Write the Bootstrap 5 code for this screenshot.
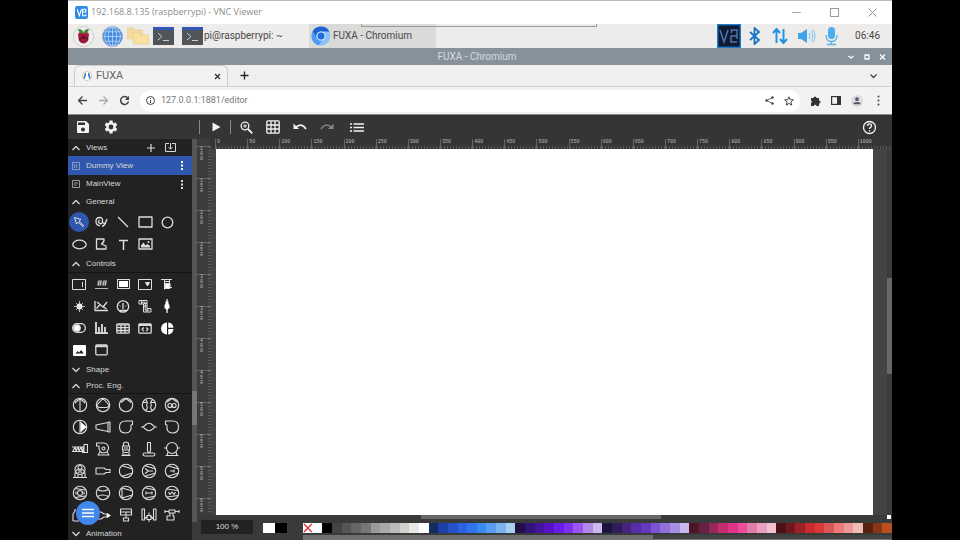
<!DOCTYPE html>
<html lang="en">
<head>
<meta charset="utf-8">
<meta name="viewport" content="width=device-width, initial-scale=1">
<title>FUXA - Chromium</title>
<link href="https://cdn.jsdelivr.net/npm/bootstrap@5.3.0/dist/css/bootstrap.min.css" rel="stylesheet">
<style>
body{background:#000;font-family:Roboto,"Liberation Sans",sans-serif;font-size:10px;line-height:1.2;color:#444}
.screen{margin:0 68px;background:#fff}
button{background:none;border:0;padding:0;color:inherit;font:inherit;display:flex;align-items:center;justify-content:center;flex:none}
svg{display:block;flex:none}
.ln{fill:none;stroke:currentColor;stroke-width:1.3;stroke-linejoin:round}
.thin{stroke-width:1}
.vnc-bar{height:24px;color:#8c8c8c;border-top:1px solid #bbb;background:#fff;font-family:"Open Sans","Noto Sans",sans-serif;font-size:9px;padding:0 15px 0 7px;gap:3px}
.vnc-buttons{gap:29px}
.task-bar{height:24px;background:#eeebeb;color:#484848;position:relative;padding-left:5px}
.vnc-tab{position:absolute;left:35.6%;top:0;height:3px;border:1px solid #999;border-top:0;width:236px}
.task-item{width:127px;height:100%;gap:1px}
.task-item.active{background:#dadad8;padding-left:2px;gap:2px}
.tray{gap:6px;padding-right:4px}
.window-bar{height:17px;background:#87919a;color:#d4dae0}
.window-buttons{gap:8px;color:#fff;padding-right:6px}
.tab-strip{height:22px;background:#efefef;border-bottom:1px solid #d2d2d2;padding-right:15px}
.page-tab{width:154px;margin-left:6px;background:#f2f2f2;border:1px solid #ccc;border-bottom:0;border-radius:6px 6px 0 0;color:#666;font-size:11px;padding:0 6px 0 7px;gap:4px}
.address-bar{height:28px;background:#f2f2f2;color:#444;border-bottom:1px solid #888;padding:0 8px 0 9px;gap:10px}
.url-box{background:#fff;border-radius:12px;height:22px;padding:0 6px;gap:6px}
.url-box input{border:0;background:none;outline:0;padding:0;font-size:9px;color:#777;min-width:0}
.tool-bar{height:24px;background:#353535;color:#f2f2f2;padding:0 15px 0 8px}
.tool-bar .rule{width:1px;height:14px;background:#888}
.side{width:124px;background:#222;color:#d8d8d8;font:8px/10px "Liberation Sans",Arial,sans-serif;overflow:hidden}
.side-head{display:flex;align-items:center;height:18px;padding:0 12px 0 4px;gap:6px;flex:none}
.side-head.lined{border-bottom:1px solid #141414}
.side-head.first{height:17px}
.side-head.slim{height:15px}
.view-row{display:flex;align-items:center;height:18px;padding:0 5px 0 4px;gap:6px;flex:none}
.view-row.current{background:#2f57ad;height:19px}
.pal{display:grid;grid-template-columns:repeat(5,22px);grid-auto-rows:22px;color:#ddd;flex:none}
.pal.wide{grid-template-columns:repeat(5,23px)}
.pal.wide .ln{stroke-width:1.1}
.pal .picked{background:#2f57ad;border-radius:50%;width:20px;height:20px;margin:1px}
.side-scroll{width:5px;background:#565656;padding-top:252px;border-bottom:18px solid #3a3a3a}
.side-scroll i{display:block;height:34px;background:#777}
.fab{position:absolute;left:8px;bottom:15px;width:24px;height:24px;border-radius:50%;background:#3f87ea;color:#fff}
.ruler-y{width:14px;background:#3c3c3c;padding-top:7px;overflow:hidden;font:5px/5px "Liberation Mono",monospace;color:#bbb}
.ruler-y span{display:block;height:32px;width:14px;padding:0 8px 0 3px;word-break:break-all;border-top:1px solid #666;
 background:repeating-linear-gradient(#5a5a5a 0 1px,transparent 1px 3px) right/3px 100% no-repeat;flex:none}
.ruler-y span:last-child{height:16px}
.ruler-x{height:10px;background:#353535;font:5px/6px "Liberation Mono",monospace;color:#bbb;padding:0 2px 0 4px}
.ruler-x span{flex:1 1 0;min-width:0;border-left:1px solid #666;padding-left:1px;background:repeating-linear-gradient(90deg,#5a5a5a 0 1px,transparent 1px 3px) bottom/100% 3px no-repeat}
.stage{background:#444}
.sheet{background:#fff;margin-left:5px}
.scroll-y{width:5px;background:#3c3c3c;padding-top:129px;margin-left:14px}
.scroll-y i{display:block;height:96px;background:#686868}
.scroll-x{height:5px;background:#3a3a3a;padding:0 1px 0 224px}
.scroll-x i{display:block;height:4px;width:240px;background:#686868}
.scroll-x b{width:4px;height:4px;background:#fff}
.foot{height:20px;background:#3a3a3a;color:#ddd}
.zoom-box{width:52px;height:14px;background:#222;font:8px/14px "Liberation Sans",Arial,sans-serif;text-align:center;margin-left:4px}
.sw{flex:1 1 0;height:10px}
.pair{margin:3px 16px 0 10px}
.pair i{width:12px;height:10px}
.pal-scroll{height:5px;background:#444;border-bottom:1px solid #777}
.pal-scroll i{display:block;width:59.4%;height:100%;background:#707070}
</style>
</head>
<body>
<div class="screen d-flex flex-column vh-100 overflow-hidden">
<header class="vnc-bar d-flex align-items-center flex-shrink-0">
 <svg width="13" height="13" viewBox="0 0 12 12"><rect width="12" height="12" rx="2" fill="#2e8ae6"/><path d="M2 3l2 6 2-6M7 5.500V3h3v2.500H7V9h3V7.500" fill="none" stroke="#fff"/></svg>
 <span class="flex-grow-1">192.168.8.135 (raspberrypi) - VNC Viewer</span>
 <div class="vnc-buttons d-flex">
 <button type="button" aria-label="Minimise"><svg width="9" height="9" viewBox="0 0 9 9" stroke="#aaa"><path d="M0 4.500h9"/></svg></button>
 <button type="button" aria-label="Maximise"><svg width="9" height="9" viewBox="0 0 9 9" stroke="#999" fill="none"><rect x=".5" y=".5" width="8" height="8"/></svg></button>
 <button type="button" aria-label="Close"><svg width="9" height="9" viewBox="0 0 9 9" stroke="#999"><path d="M.5.500l8 8m0-8l-8 8"/></svg></button>
 </div>
</header>
<div class="task-bar d-flex align-items-center pe-2 flex-shrink-0">
 <div class="vnc-tab"></div>
 <button type="button" aria-label="Raspberry menu" class="me-2"><svg width="21" height="21" viewBox="0 0 21 21"><circle cx="10.500" cy="10.500" r="10" fill="#eee" stroke="#ccc"/><circle cx="8" cy="9" r="3" fill="#b3203f"/><circle cx="13" cy="9" r="3" fill="#b3203f"/><circle cx="10.500" cy="12.500" r="5" fill="#9d1838"/><circle cx="10.500" cy="11.500" r="1.500" fill="#4c1020"/><circle cx="7" cy="12.500" r="1" fill="#4c1020"/><circle cx="14" cy="12.500" r="1" fill="#4c1020"/><path d="M5 3q5 0 5.500 4Q6 8 5 3zM16 3q-5 0-5.500 4Q15 8 16 3z" fill="#3f8a35"/></svg></button>
 <button type="button" aria-label="Browser" class="me-1"><svg width="21" height="21" viewBox="0 0 20 20" fill="none" stroke="#b4d6f8" stroke-width=".8"><circle cx="10" cy="10" r="9.500" fill="#4688dc" stroke="#8aa0b8"/><ellipse cx="10" cy="10" rx="4" ry="9"/><ellipse cx="10" cy="10" rx="7.500" ry="9"/><path d="M10 1v18M1 10h18M2.500 5.500h15M2.500 14.500h15"/></svg></button>
 <button type="button" aria-label="Files" class="me-1"><svg width="22" height="18" viewBox="0 0 22 18" stroke="#e3cc8c" stroke-width=".6"><path d="M.5 1h6l1 2h8v9H.5z" fill="#f4dca0"/><path d="M6.500 6h6l1 2h8v9h-15z" fill="#fbe0a0"/></svg></button>
 <button type="button" aria-label="Terminal" class="me-2"><svg width="21" height="18" viewBox="0 0 21 18"><rect width="21" height="18" fill="#50555a"/><rect width="21" height="3" fill="#3157b8"/><path d="M5 6l4 3.500L5 13M10 13.500h6" fill="none" stroke="#ccc"/></svg></button>
 <div class="task-item d-flex align-items-center"><svg width="21" height="18" viewBox="0 0 21 18"><rect width="21" height="18" fill="#50555a"/><rect width="21" height="3" fill="#3157b8"/><path d="M5 6l4 3.500L5 13M10 13.500h6" fill="none" stroke="#ccc"/></svg><span>pi@raspberrypi: ~</span></div>
 <div class="task-item active d-flex align-items-center"><svg width="20" height="20" viewBox="0 0 20 20"><circle cx="10" cy="10" r="9.500" fill="#8ec3fa"/><path d="M10 .5a9.500 9.500 0 0 1 8.500 5H10a4.500 4.500 0 0 0-4 7L1.600 5.500A9.500 9.500 0 0 1 10 .5z" fill="#1c62d0"/><path d="M1.600 5.500L6 12.500a4.500 4.500 0 0 0 5 2l-3 4.800A9.500 9.500 0 0 1 1.600 5.500z" fill="#4c9af5"/><circle cx="10" cy="10" r="4.500" fill="#cfe5fd"/><circle cx="10" cy="10" r="3.500" fill="#1d6fe0"/></svg><span>FUXA - Chromium</span></div>
 <div class="tray ms-auto d-flex align-items-center">
 <svg width="24" height="24" viewBox="0 0 24 24"><rect x=".7" y=".7" width="22.600" height="22.600" fill="#101a30" stroke="#1c7ad0" stroke-width="1.400"/><path d="M3 6l4 12 4-12M20 18h-6v-6h6V6h-5.500v3M20 12v3" fill="none" stroke="#4a78b0" stroke-width="1.500"/></svg>
 <svg width="15" height="18" viewBox="0 0 15 18" fill="none" stroke="#1675c8" stroke-width="1.800"><path d="M3 5l9 8-4.500 4V1L12 5l-9 8"/></svg>
 <svg width="23" height="18" viewBox="0 0 23 18" fill="none" stroke="#2394e4" stroke-width="2"><path d="M8.500 16V2M5 6l3.500-4L12 6M15.500 2v14M12 12l3.500 4 3.500-4"/></svg>
 <svg width="19" height="16" viewBox="0 0 19 16"><path d="M1 5h3l6-4v14l-6-4H1z" fill="#3da5ea"/><path d="M12 5q2 3 0 6M14 3q3.500 5 0 10M16 1.500q4 6.500 0 13" fill="none" stroke="#7bc4f3"/></svg>
 <svg width="19" height="20" viewBox="0 0 19 20"><rect x="6" y="1" width="7" height="12" rx="3.500" fill="#4dadee"/><path d="M4 9q0 6.500 5.500 6.500T15 9M9.500 15v3.500M5 18.500h9" fill="none" stroke="#58b2ee" stroke-width="1.300"/></svg>
 <span class="ps-2">06:46</span>
 </div>
</div>
<div class="window-bar row g-0 align-items-center flex-shrink-0 flex-nowrap">
 <div class="col"></div><div class="col text-center">FUXA - Chromium</div>
 <div class="window-buttons col d-flex justify-content-end">
 <button type="button" aria-label="Minimise window"><svg class="ln" width="8" height="8" viewBox="0 0 8 8"><path d="M1.500 3L4 5l2.500-2"/></svg></button>
 <button type="button" aria-label="Maximise window"><svg class="ln" width="8" height="8" viewBox="0 0 8 8"><rect x="2" y="2" width="4" height="4"/></svg></button>
 <button type="button" aria-label="Close window"><svg class="ln" width="7" height="8" viewBox="0 0 7 8"><path d="M1 1.500l5 5m0-5l-5 5"/></svg></button>
 </div>
</div>
<div class="tab-strip d-flex align-items-stretch flex-shrink-0">
 <div class="page-tab d-flex align-items-center">
 <svg width="10" height="10" viewBox="0 0 10 10"><circle cx="5" cy="5" r="4.500" fill="#fff" stroke="#d8c9a0"/><path d="M1.500 7.500Q2 2 4 1.500L4 4.500 2.500 8zM8.500 7.500Q8 2 6 1.500L6 4.500 7.500 8z" fill="#3c80c8"/></svg>
 <span class="flex-grow-1">FUXA</span>
 <button type="button" aria-label="Close tab"><svg class="ln" style="color:#333" width="7" height="7" viewBox="0 0 7 7"><path d="M1 1l5 5m0-5L1 6"/></svg></button></div>
 <button type="button" aria-label="New tab" class="ms-2 ps-1 text-dark"><svg class="ln" width="9" height="9" viewBox="0 0 9 9"><path d="M4.500.5v8M.5 4.500h8"/></svg></button>
 <button type="button" aria-label="Search tabs" class="ms-auto"><svg class="ln" width="7" height="6" viewBox="0 0 7 6"><path d="M.5 1.500l3 3 3-3"/></svg></button>
</div>
<div class="address-bar d-flex align-items-center flex-shrink-0">
 <button type="button" aria-label="Back"><svg class="ln" width="11" height="11" viewBox="0 0 11 11"><path d="M10 5.500H1.500M5.500 1.500l-4 4 4 4"/></svg></button>
 <button type="button" aria-label="Forward" style="color:#aaa"><svg class="ln" width="11" height="11" viewBox="0 0 11 11"><path d="M1 5.500h8.500M5.500 1.500l4 4-4 4"/></svg></button>
 <button type="button" aria-label="Reload"><svg width="11" height="11" viewBox="0 0 11 11"><path d="M8.800 3A4 4 0 1 0 9.500 6.500" fill="none" stroke="#444" stroke-width="1.500"/><path d="M10 .8V5H5.800z" fill="#444"/></svg></button>
 <div class="url-box d-flex align-items-center flex-grow-1">
 <svg class="ln thin" width="9" height="9" viewBox="0 0 9 9"><circle cx="4.500" cy="4.500" r="4"/><path d="M4.500 4v3M4.500 2v1"/></svg>
 <input class="flex-grow-1" type="text" aria-label="Address" value="127.0.0.1:1881/editor">
 <button type="button" aria-label="Share" class="me-1"><svg width="9" height="9" viewBox="0 0 9 9" fill="#444"><path d="M7.500 1.500l-6 3 6 3" fill="none" stroke="#444" stroke-width=".8"/><circle cx="7.500" cy="1.500" r="1.200"/><circle cx="1.500" cy="4.500" r="1.200"/><circle cx="7.500" cy="7.500" r="1.200"/></svg></button>
 <button type="button" aria-label="Bookmark"><svg class="ln thin" width="10" height="10" viewBox="0 0 10 10"><path d="M5 .8l1.200 2.900 3.200.2-2.500 2 .8 3.200L5 7.400 2.300 9.100l.8-3.200-2.500-2 3.200-.2z"/></svg></button>
 </div>
 <button type="button" aria-label="Extensions"><svg width="11" height="11" viewBox="0 0 11 11" fill="#333"><path d="M1 3h2.500a1.500 1.500 0 1 1 3 0H9v2.500a1.500 1.500 0 0 1 0 3V11H6.500a1.300 1.300 0 0 0-2.600 0H1V8a1.400 1.400 0 0 0 0-2.600z"/></svg></button>
 <button type="button" aria-label="Side panel"><svg width="10" height="9" viewBox="0 0 10 9"><rect x=".6" y=".6" width="8.800" height="7.800" fill="none" stroke="#333" stroke-width="1.200"/><path d="M6 0h4v9H6z" fill="#333"/></svg></button>
 <button type="button" aria-label="Profile"><svg width="12" height="12" viewBox="0 0 13 13" fill="#555a68"><circle cx="6.500" cy="6.500" r="6.500" fill="#dcdce0"/><circle cx="6.500" cy="4.500" r="2"/><path d="M2.500 10q0-2.500 4-2.500t4 2.500z"/></svg></button>
 <button type="button" aria-label="Browser menu"><svg width="11" height="11" viewBox="0 0 11 11" fill="#444"><circle cx="5.500" cy="1.500" r="1"/><circle cx="5.500" cy="5.500" r="1"/><circle cx="5.500" cy="9.500" r="1"/></svg></button>
</div>
<nav class="tool-bar d-flex align-items-center flex-shrink-0" aria-label="Editor">
 <button type="button" aria-label="Save"><svg width="14" height="14" viewBox="0 0 14 14"><path fill="currentColor" fill-rule="evenodd" d="M2 1h8l3 3v8a1 1 0 0 1-1 1H2a1 1 0 0 1-1-1V2a1 1 0 0 1 1-1zm0 1.500V5h7V2.500zM7 7.500a2 2 0 1 0 .01 0z"/></svg></button>
 <button type="button" aria-label="Settings" style="margin-left:13px"><svg width="16" height="16" viewBox="0 0 24 24" fill="currentColor"><path d="M19.140 12.940c.04-.3.060-.61.060-.94s-.02-.64-.07-.94l2.030-1.580a.49.490 0 0 0 .12-.61l-1.920-3.320a.49.490 0 0 0-.59-.22l-2.390.96a7 7 0 0 0-1.620-.94l-.36-2.540A.48.480 0 0 0 13.920 2.400h-3.840a.48.480 0 0 0-.47.410l-.36 2.540a7.200 7.200 0 0 0-1.620.94l-2.390-.96a.48.480 0 0 0-.59.220L2.740 8.870a.47.470 0 0 0 .12.610l2.030 1.580a7 7 0 0 0 0 1.880l-2.030 1.580a.49.490 0 0 0-.12.610l1.920 3.320c.12.220.37.290.59.220l2.390-.96c.5.380 1.030.7 1.620.94l.36 2.540c.05.240.24.410.48.410h3.840c.24 0 .44-.17.470-.41l.36-2.540a7.200 7.200 0 0 0 1.620-.94l2.390.96c.22.080.47 0 .59-.22l1.920-3.320a.47.470 0 0 0-.12-.61zM12 15.600a3.600 3.600 0 1 1 0-7.200 3.600 3.600 0 0 1 0 7.200z"/></svg></button>
 <span class="rule" style="margin-left:80px"></span>
 <button type="button" aria-label="Run" style="margin-left:11px"><svg width="10" height="10" viewBox="0 0 10 10" fill="currentColor"><path d="M1.500.5v9l8-4.500z"/></svg></button>
 <span class="rule" style="margin-left:9px"></span>
 <div class="d-flex align-items-center" style="gap:13px;margin-left:9px">
 <button type="button" aria-label="Zoom"><svg class="ln" width="13" height="13" viewBox="0 0 13 13"><circle cx="5" cy="5" r="3.800"/><path d="M8 8l4.300 4.300" stroke-width="1.800"/><path d="M3.200 5h3.600M5 3.200v3.600" stroke-width="1"/></svg></button>
 <button type="button" aria-label="Grid"><svg class="ln" width="14" height="14" viewBox="0 0 14 14"><rect x=".8" y=".8" width="12.400" height="12.400" rx="1"/><path d="M5 1v12M9 1v12M1 5h12M1 9h12"/></svg></button>
 <button type="button" aria-label="Undo"><svg width="14" height="10" viewBox="0 0 14 10"><path d="M2.500 5.500Q8.500 0 13 7" fill="none" stroke="currentColor" stroke-width="1.800"/><path d="M.5 1.500V7H6z" fill="currentColor"/></svg></button>
 <button type="button" aria-label="Redo" style="color:#888"><svg width="14" height="10" viewBox="0 0 14 10"><path d="M11.500 5.500Q5.500 0 1 7" fill="none" stroke="currentColor" stroke-width="1.500"/><path d="M13.500 1.500V7H8z" fill="currentColor"/></svg></button>
 <button type="button" aria-label="List" style="margin-left:3px"><svg width="14" height="9" viewBox="0 0 14 9" fill="none" stroke="currentColor" stroke-width="1.500"><path d="M0 1h2M3.500 1H14M0 4.500h2M3.500 4.500H14M0 8h2M3.500 8H14"/></svg></button>
 </div>
 <button type="button" aria-label="Help" class="ms-auto"><svg class="ln" width="15" height="15" viewBox="0 0 15 15"><circle cx="7.500" cy="7.500" r="6"/><path d="M5.500 6q0-2.200 2-2.200t2 1.900q0 1-1 1.700t-1 1.600M7.500 10.200v1.300"/></svg></button>
</nav>
<main class="d-flex flex-grow-1 position-relative" style="min-height:0">
<aside class="side d-flex flex-column flex-shrink-0">
 <div class="side-head first"><svg class="ln" width="8" height="6" viewBox="0 0 8 6"><path d="M.5 5L4 1.500 7.500 5"/></svg><span class="flex-grow-1">Views</span>
 <button type="button" aria-label="Add view" class="me-1"><svg class="ln" width="8" height="8" viewBox="0 0 8 8"><path d="M4 0v8M0 4h8" stroke-width="1.200"/></svg></button>
 <button type="button" aria-label="Import view" class="me-1"><svg class="ln thin" width="11" height="9" viewBox="0 0 11 9"><path d="M4 .5H.5v8h10v-8H7M5.500 0v6M3.500 4.200l2 2 2-2"/></svg></button></div>
 <div class="view-row current"><svg class="ln thin" stroke-dasharray="1 1" width="8" height="8" viewBox="0 0 8 8"><rect x=".5" y=".5" width="7" height="7"/><path d="M2 3h4M2 5h4"/></svg><span class="flex-grow-1">Dummy View</span><button type="button" aria-label="Dummy View menu"><svg width="10" height="9" viewBox="0 0 10 9" fill="#fff"><path d="M4 0h2v2H4zM4 3.500h2v2H4zM4 7h2v2H4z"/></svg></button></div>
 <div class="view-row"><svg class="ln thin" style="color:#999" width="8" height="8" viewBox="0 0 8 8"><rect x=".5" y=".5" width="7" height="7"/><path d="M2 3h4M2 5h2.500"/></svg><span class="flex-grow-1">MainView</span><button type="button" aria-label="MainView menu"><svg width="10" height="9" viewBox="0 0 10 9" fill="#ddd"><path d="M4 0h2v2H4zM4 3.500h2v2H4zM4 7h2v2H4z"/></svg></button></div>
 <div class="side-head"><svg class="ln" width="8" height="6" viewBox="0 0 8 6"><path d="M.5 5L4 1.500 7.500 5"/></svg><span>General</span></div>
 <div class="pal">
 <button type="button" aria-label="Select" class="picked"><svg class="ln thin" width="12" height="12" viewBox="0 0 12 12"><path d="M1.500 1.500L3.500 8l1.700-1.800L10.500 11M1.500 1.500L8 3.500 6 5.200 11 10"/></svg></button>
 <button type="button" aria-label="Pencil"><svg class="ln" width="13" height="12" viewBox="0 0 13 12"><path d="M5 9.500Q1 9.500 1 5.500T4.500 1.500 7.500 5 5 7.500 3.500 5.500 5 4M7 5q1.500 3 2.500 2.500T12 3M11 5.500q-1 4-4 5"/></svg></button>
 <button type="button" aria-label="Line"><svg class="ln" width="12" height="12" viewBox="0 0 12 12"><path d="M1 1l10 10"/></svg></button>
 <button type="button" aria-label="Rectangle"><svg class="ln" width="15" height="12" viewBox="0 0 15 12"><rect x="1" y="1" width="13" height="10"/></svg></button>
 <button type="button" aria-label="Circle"><svg class="ln" width="13" height="13" viewBox="0 0 13 13"><circle cx="6.500" cy="6.500" r="5.300"/></svg></button>
 <button type="button" aria-label="Ellipse"><svg class="ln" width="15" height="11" viewBox="0 0 15 11"><ellipse cx="7.500" cy="5.500" rx="6.700" ry="4.300"/></svg></button>
 <button type="button" aria-label="Path"><svg class="ln" width="12" height="12" viewBox="0 0 12 12"><path d="M1.500 1h7.500q.5 3-2.500 5L11 8v3H1.500z"/></svg></button>
 <button type="button" aria-label="Text"><svg class="ln" width="11" height="11" viewBox="0 0 11 11"><path d="M1 1.500h9M5.500 1.500V11" stroke-width="1.500"/></svg></button>
 <button type="button" aria-label="Image"><svg class="ln" width="15" height="12" viewBox="0 0 15 12"><rect x="1" y="1" width="13" height="10"/><path d="M3 9.500V7.500l2.500-3 2 3 2-1.500 2.500 2v1.500z" fill="currentColor" stroke="none"/><circle cx="10.500" cy="4" r="1" fill="currentColor" stroke="none"/></svg></button>
 </div>
 <div class="side-head lined"><svg class="ln" width="8" height="6" viewBox="0 0 8 6"><path d="M.5 5L4 1.500 7.500 5"/></svg><span>Controls</span></div>
 <div class="pal">
 <button type="button" aria-label="Input"><svg class="ln thin" width="14" height="11" viewBox="0 0 14 11"><rect x=".5" y=".5" width="13" height="10"/><path d="M10.500 3v5"/></svg></button>
 <button type="button" aria-label="Output"><svg class="ln" style="stroke-width:.8" width="13" height="11" viewBox="0 0 13 11"><path d="M0 9.500h13M4.200 1L3 7M6.200 1L5 7M2.500 3H7M2 5h4.500M9.200 1L8 7M11.200 1L10 7M7.500 3H12M7 5h4.500"/></svg></button>
 <button type="button" aria-label="Button"><svg width="13" height="10" viewBox="0 0 13 10"><rect x=".5" y=".5" width="12" height="9" fill="none" stroke="#ddd"/><path d="M2 2h9v6H2z" fill="#fff"/></svg></button>
 <button type="button" aria-label="Drop-down"><svg class="ln thin" width="14" height="11" viewBox="0 0 14 11"><rect x=".5" y=".5" width="13" height="10"/><path d="M7.500 3.500h4L9.500 7z" fill="#fff"/></svg></button>
 <button type="button" aria-label="Valve"><svg width="12" height="12" viewBox="0 0 12 12" fill="none" stroke="#ddd"><path d="M0 1.500h11M3.500 1v10.500M8.500 1v4M3.500 3.500h5M9 9.500h2"/><path d="M4 5.500h5v5H4z" fill="#fff"/></svg></button>
 <button type="button" aria-label="Light"><svg width="11" height="11" viewBox="0 0 11 11"><circle cx="5.500" cy="5.500" r="2.900" fill="#fff"/><path d="M5.500 0v11M0 5.500h11M2 2l7 7m0-7L2 9" stroke="#ddd" stroke-width=".8"/></svg></button>
 <button type="button" aria-label="Chart"><svg class="ln" width="14" height="12" viewBox="0 0 14 12"><path d="M1 1v9.500h13M2.500 8.500l3.500-4 3 2.500 4-5M3 2l3 2.500M9.500 7l3 2"/></svg></button>
 <button type="button" aria-label="Gauge"><svg class="ln" width="14" height="13" viewBox="0 0 14 13"><circle cx="7" cy="6.500" r="5.700"/><path d="M3.500 10.500h7M7 9V3"/><path d="M3.500 5.500l1 .7M10.500 5.500l-1 .7" stroke-width="1"/></svg></button>
 <button type="button" aria-label="Pipe"><svg class="ln thin" width="14" height="14" viewBox="0 0 14 14"><path d="M1 1.500h8v8h4v3.500H5.500V5H1zM3.500 1.500V5M9 4.500H5.500M9 7H5.500M9 9.500v3.500M3 3.200h4.200v8h4"/></svg></button>
 <button type="button" aria-label="Slider"><svg width="8" height="14" viewBox="0 0 8 14"><path d="M4 0v14" stroke="#ddd" stroke-width="1.500"/><path d="M2.500 2.500h3V5l1 1v3L4 11 1.500 9V6l1-1z" fill="#fff"/></svg></button>
 <button type="button" aria-label="Switch"><svg class="ln" width="14" height="10" viewBox="0 0 14 10"><rect x=".7" y=".7" width="12.600" height="8.600" rx="4.300"/><circle cx="5" cy="5" r="3.200" fill="#fff"/></svg></button>
 <button type="button" aria-label="Bar chart"><svg width="13" height="12" viewBox="0 0 13 12" stroke="#ddd" stroke-width="1.800"><path d="M1 0v11.500M4 5v6M7 2v9M10 5v6M0 11.200h13"/></svg></button>
 <button type="button" aria-label="Table"><svg class="ln" width="14" height="11" viewBox="0 0 14 11"><rect x=".8" y=".8" width="12.400" height="9.400" rx="1"/><path d="M1 1.800h12M1 4.700h12M1 7.500h12M5 2v8M9 2v8"/></svg></button>
 <button type="button" aria-label="Frame"><svg class="ln" width="14" height="11" viewBox="0 0 14 11"><rect x=".8" y=".8" width="12.400" height="9.400" rx="1"/><path d="M1 2h12" stroke-width="2"/><path d="M5.800 4.500l-1.800 1.800 1.800 1.800M8.200 4.500L10 6.300 8.200 8.100"/></svg></button>
 <button type="button" aria-label="Pie chart"><svg width="13" height="13" viewBox="0 0 13 13" fill="#fff"><path d="M6 .5v12a6 6 0 0 1 0-12zM7.200.5A6 6 0 0 1 12.500 5.800H7.200zM7.200 7h5.300a6 6 0 0 1-5.300 5.500z"/></svg></button>
 <button type="button" aria-label="Picture"><svg width="13" height="11" viewBox="0 0 13 11"><rect width="13" height="11" rx="1" fill="#fff"/><path d="M2.500 8.500l2-2.500 1.500 1.500 2.200-2.500 2.500 3.500z" fill="#222"/></svg></button>
 <button type="button" aria-label="Panel"><svg class="ln" width="13" height="12" viewBox="0 0 13 12"><rect x=".8" y=".8" width="11.400" height="10" rx="1"/><path d="M1 2.200h11" stroke-width="2"/></svg></button>
 </div>
 <div class="side-head"><svg class="ln" width="8" height="6" viewBox="0 0 8 6"><path d="M.5 1L4 4.500 7.500 1"/></svg><span>Shape</span></div>
 <div class="side-head slim lined"><svg class="ln" width="8" height="6" viewBox="0 0 8 6"><path d="M.5 5L4 1.500 7.500 5"/></svg><span>Proc. Eng.</span></div>
 <div class="pal wide">
 <button type="button" aria-label="Agitator"><svg class="ln" width="16" height="16" viewBox="0 0 16 16"><circle cx="8" cy="8" r="6.700"/><path d="M8 1v14M8 1.500L3 6M8 1.500L13 6"/></svg></button>
 <button type="button" aria-label="Separator"><svg class="ln" width="16" height="16" viewBox="0 0 16 16"><circle cx="8" cy="8" r="6.700"/><path d="M8 1.500L2 8q0 2.500 3 2.500h6q3 0 3-2.500z"/></svg></button>
 <button type="button" aria-label="Pump"><svg class="ln" width="16" height="16" viewBox="0 0 16 16"><circle cx="8" cy="8" r="6.700"/><path d="M3 5.500l5-4 5 4"/></svg></button>
 <button type="button" aria-label="Double pump"><svg class="ln" width="16" height="16" viewBox="0 0 16 16"><circle cx="8" cy="8" r="6.700"/><path d="M4.500 2.500q3 3 1 5.500 2 3-1 5.500M11.500 2.500q-3 3-1 5.500-2 3 1 5.500M2 5.500h4M10 5.500h4"/></svg></button>
 <button type="button" aria-label="Rotary pump"><svg class="ln" width="16" height="16" viewBox="0 0 16 16"><circle cx="8" cy="8" r="6.700"/><circle cx="5.900" cy="8.500" r="2"/><circle cx="10.100" cy="8.500" r="2"/><path d="M3 5l5-3.500L13 5"/></svg></button>
 <button type="button" aria-label="Centrifugal pump"><svg class="ln" width="16" height="16" viewBox="0 0 16 16"><circle cx="8" cy="8" r="6.700"/><path d="M8 1v14"/><path d="M8.500 2.500L14.500 8l-6 5.500z" fill="#fff" stroke="none"/></svg></button>
 <button type="button" aria-label="Reducer"><svg class="ln" width="16" height="14" viewBox="0 0 16 14"><path d="M1 5L13 2.500v9L1 9zM13 2h2v10h-2"/></svg></button>
 <button type="button" aria-label="Blower left"><svg class="ln" width="16" height="16" viewBox="0 0 16 16"><path d="M8 2h6.500v3.500L13 6q1 8-5.500 8-6 0-6-6T8 2z"/></svg></button>
 <button type="button" aria-label="Coupling"><svg class="ln" width="16" height="14" viewBox="0 0 16 14"><path d="M0 7h2l3-2.500q3-2.500 6 0L14 7h2M2 7l3 2.500q3 2.500 6 0L14 7"/></svg></button>
 <button type="button" aria-label="Blower right"><svg class="ln" width="16" height="16" viewBox="0 0 16 16"><path d="M8.500 2H1.500v3.500L3 6Q2 14 8.500 14q6 0 6-6t-6-6z"/></svg></button>
 <button type="button" aria-label="Screw pump"><svg class="ln" width="16" height="12" viewBox="0 0 16 12"><path d="M0 4h11v4.500H0M1 8l2-4 1 4 2-4 1 4 2-4 1 4M12 1.500h3.500v8H12zM10 9.500h2"/></svg></button>
 <button type="button" aria-label="Volute pump"><svg class="ln" width="16" height="16" viewBox="0 0 16 16"><path d="M1.500 2H9q4.500 1 4.500 5T9 12q-5 0-5-5V5H1.500zM5 11l-2 3h11l-2-3"/><circle cx="8.500" cy="7.500" r="1.500"/></svg></button>
 <button type="button" aria-label="Vertical pump"><svg class="ln" width="12" height="16" viewBox="0 0 12 16"><path d="M3.500 2L6 1l2.500 1v3h-5zM2.500 5h7v4h-7zM3 9v5h6V9M1.500 14.500h9M4 11.500h4M4 7h4"/></svg></button>
 <button type="button" aria-label="Submersible"><svg class="ln" width="16" height="16" viewBox="0 0 16 16"><path d="M6.500 1.500h3V10L8 12l-1.500-2zM2 13.500q0-1.500 2-1.500h8q2 0 2 1.500T12 15H4q-2 0-2-1.500z"/></svg></button>
 <button type="button" aria-label="Tank"><svg class="ln" width="16" height="16" viewBox="0 0 16 16"><circle cx="8" cy="7" r="5.500"/><path d="M0 7h2.500M13.500 7H16M4 11l-1 3.500M13 14.500L12 11M1.500 14.500h13"/></svg></button>
 <button type="button" aria-label="Compressor"><svg class="ln" width="16" height="16" viewBox="0 0 16 16"><circle cx="8" cy="6.500" r="5"/><circle cx="8" cy="4.500" r="2"/><circle cx="5.500" cy="8.500" r="1.800"/><circle cx="10.500" cy="8.500" r="1.800"/><path d="M3 9.500v5M13 9.500v5M1 14.500h14M6 12v2M10 12v2"/></svg></button>
 <button type="button" aria-label="Nozzle"><svg class="ln" width="16" height="12" viewBox="0 0 16 12"><path d="M1 3h8l2 1.500h4v3h-4L9 9H1z"/></svg></button>
 <button type="button" aria-label="Fan 1"><svg class="ln" width="16" height="16" viewBox="0 0 16 16"><circle cx="8" cy="8" r="6.700"/><path d="M4 2.800L14.500 6M4 13.200L14.500 10"/></svg></button>
 <button type="button" aria-label="Fan 2"><svg class="ln" width="16" height="16" viewBox="0 0 16 16"><circle cx="8" cy="8" r="6.700"/><path d="M4 2.800L14.500 6M4 13.200L14.500 10M4 5.500L7.500 8 4 10.500M7.500 8H12"/></svg></button>
 <button type="button" aria-label="Fan 3"><svg class="ln" width="16" height="16" viewBox="0 0 16 16"><circle cx="8" cy="8" r="6.700"/><path d="M4 2.800L14.500 6M4 13.200L14.500 10M6 8h4M10 6.500v3"/></svg></button>
 <button type="button" aria-label="Fan 4"><svg class="ln" width="16" height="16" viewBox="0 0 16 16"><circle cx="8" cy="8" r="6.700"/><circle cx="8" cy="8" r="2.500"/><path d="M3 3.500L13.500 5M3 12.500L13.500 11M4 6.500v3M12 6.500v3"/></svg></button>
 <button type="button" aria-label="Fan 5"><svg class="ln" width="16" height="16" viewBox="0 0 16 16"><circle cx="8" cy="8" r="6.700"/><path d="M2.500 4.500q5 3 11 0M2.500 11.500q5-3 11 0"/></svg></button>
 <button type="button" aria-label="Fan 6"><svg class="ln" width="16" height="16" viewBox="0 0 16 16"><circle cx="8" cy="8" r="6.700"/><path d="M4 3v10M4 3l10.500 3M4 13l10.500-3"/></svg></button>
 <button type="button" aria-label="Fan 7"><svg class="ln" width="16" height="16" viewBox="0 0 16 16"><circle cx="8" cy="8" r="6.700"/><path d="M4 2.800L14 5M4 13.200L14 11M5 8h6M5 6.500v3M11 6.500v3"/></svg></button>
 <button type="button" aria-label="Fan 8"><svg class="ln" width="16" height="16" viewBox="0 0 16 16"><circle cx="8" cy="8" r="6.700"/><path d="M3 4l11 1.500M3 12l11-1.500M4.500 7L6 9.500 8 7l2 2.500L11.500 7"/></svg></button>
 <button type="button" aria-label="Vessel"><svg class="ln" width="16" height="16" viewBox="0 0 16 16"><path d="M1 14V7l2-3v-2M1 14h6"/></svg></button>
 <button type="button" aria-label="Ejector"><svg class="ln" width="16" height="14" viewBox="0 0 16 14"><path d="M0 4h6l3 2h3v3H9l-3 2H0"/><path d="M12 5l4 2.500-4 2.500z" fill="#fff" stroke="none"/></svg></button>
 <button type="button" aria-label="Mixer"><svg class="ln" width="14" height="16" viewBox="0 0 14 16"><path d="M1.500 2h11v6h-11zM1.500 5h11M7 5v6M4.500 11h5v3h-5z"/></svg></button>
 <button type="button" aria-label="Balance"><svg class="ln" width="16" height="16" viewBox="0 0 16 16"><path d="M1 2h2.500v11H1zM12.500 2H15v11h-2.500zM3.500 12L7 8.500h2l3.500 3.500M6 8.500h4v4H6zM8 12v3M8 5.500v3"/></svg></button>
 <button type="button" aria-label="Feeder"><svg class="ln" width="16" height="16" viewBox="0 0 16 16"><path d="M1 3v3M1 4.500h4M5 3h6v3H5zM11 4.500h4M15 3v3M6 6v3H3v4h7V9H9V6M3 9v4"/></svg></button>
 </div>
 <div class="side-head slim"><svg class="ln" width="8" height="6" viewBox="0 0 8 6"><path d="M.5 1L4 4.500 7.500 1"/></svg><span>Animation</span></div>
</aside>
<div class="side-scroll flex-shrink-0"><i></i></div>
<button type="button" class="fab" aria-label="Open menu"><svg width="12" height="12" viewBox="0 0 12 12" stroke="#fff" stroke-width="1.300"><path d="M0 2.500h12M0 6h12M0 9.500h12"/></svg></button>
<section class="stage d-flex flex-column flex-grow-1" style="min-width:0">
 <div class="d-flex flex-grow-1" style="min-height:0">
 <div class="ruler-y d-flex flex-column flex-shrink-0"><span>100</span><span>150</span><span>200</span><span>250</span><span>300</span><span>350</span><span>400</span><span>450</span><span>500</span><span>550</span><span>600</span><span>650</span></div>
 <div class="d-flex flex-column flex-grow-1" style="min-width:0">
 <div class="ruler-x d-flex flex-shrink-0"><span>0</span><span>50</span><span>100</span><span>150</span><span>200</span><span>250</span><span>300</span><span>350</span><span>400</span><span>450</span><span>500</span><span>550</span><span>600</span><span>650</span><span>700</span><span>750</span><span>800</span><span>850</span><span>900</span><span>950</span><span>1000</span></div>
 <div class="d-flex flex-grow-1"><div class="sheet flex-grow-1"></div><div class="scroll-y flex-shrink-0"><i></i></div></div>
 </div>
 </div>
 <div class="scroll-x d-flex justify-content-between flex-shrink-0"><i></i><b></b></div>
 <div class="foot d-flex flex-shrink-0">
 <div class="zoom-box flex-shrink-0">100 %</div>
 <div class="pair d-flex flex-shrink-0"><i class="bg-white"></i><i class="bg-black"></i></div>
 <div class="flex-grow-1 d-flex flex-column justify-content-between" style="min-width:0;padding-top:3px"><div class="d-flex" id="swatches"><svg class="sw bg-white" viewBox="0 0 10 10" preserveAspectRatio="none" stroke="#d33" stroke-width="1.400"><path d="M1 1l8 8m0-8L1 9"/></svg></div><div class="pal-scroll"><i></i></div></div>
 </div>
</section>
</main>
</div>
<script>
const colours = `fff 000 444 555 666 777 999 aaa bbb d4d0cc e8e8e8 fff
 142c66 1c3fa8 2452c8 2a62e0 2c74f0 3a8af0 5a9cf0 7ab4f4 a8cff0
 201048 301478 4414a0 5414c4 6a1ce8 8030f0 9858f0 b088e8 ccb8ec
 1c1440 301c58 44247c 5430a4 6438c0 7c54d0 9070d8 a890e0 c4b8ec
 501428 6c2040 98285c c42c70 e03488 ec4c98 e07ca8 e8a0c0 f0c0cc
 4c1018 701820 9c2028 c82c30 dc3838 d85858 f07878 ec9898 f0bcb8
 582010 883818 b85020`.trim().split(/\s+/);
const strip = document.getElementById('swatches');
for (const c of colours) {
  const s = document.createElement('i');
  s.className = 'sw';
  s.style.background = '#' + c;
  strip.append(s);
}
</script>
<script src="https://cdn.jsdelivr.net/npm/bootstrap@5.3.0/dist/js/bootstrap.bundle.min.js"></script>
</body>
</html>
